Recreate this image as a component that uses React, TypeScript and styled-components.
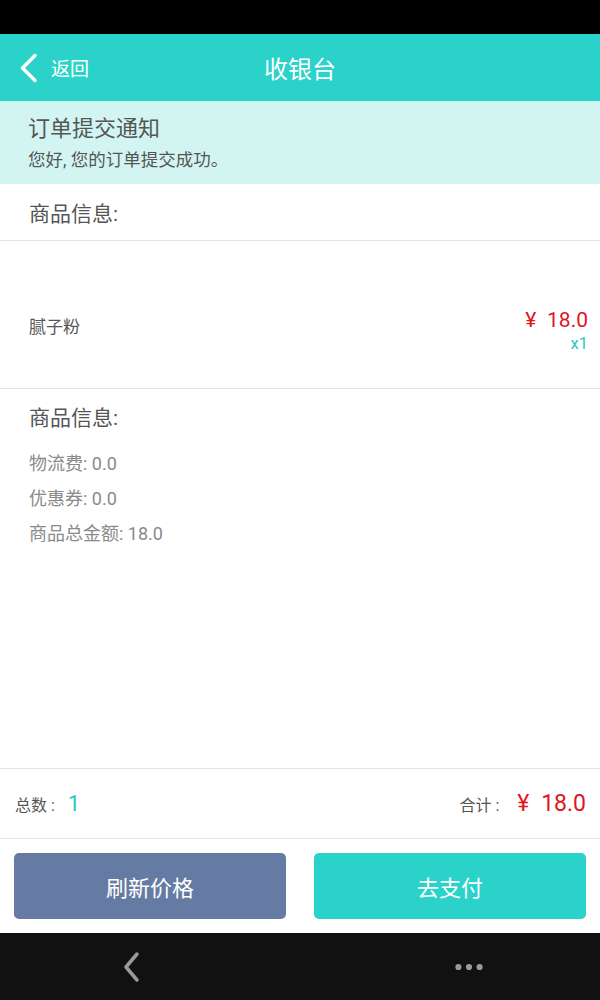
import styled, { createGlobalStyle } from 'styled-components';

const GlobalStyle = createGlobalStyle`
  html, body {
    margin: 0;
    padding: 0;
    background: #fff;
  }
  body {
    font-family: Roboto, "Noto Sans CJK SC", sans-serif;
  }
`;

const Screen = styled.div`
  width: 600px;
  height: 1000px;
  display: flex;
  flex-direction: column;
  background: #fff;
  overflow: hidden;
`;

const StatusBar = styled.div`
  height: 34px;
  background: #000;
  flex-shrink: 0;
`;

const Header = styled.div`
  height: 67px;
  background: #2ad2c9;
  display: flex;
  align-items: center;
  position: relative;
  flex-shrink: 0;
`;

const BackButton = styled.div`
  display: flex;
  align-items: center;
  padding-left: 18px;
  color: #fff;
  font-size: 19px;
  gap: 13px;
`;

const Title = styled.div`
  position: absolute;
  left: 0;
  right: 0;
  text-align: center;
  color: #fff;
  font-size: 24px;
  pointer-events: none;
`;

const Notice = styled.div`
  height: 83px;
  background: #d3f5f2;
  display: flex;
  flex-direction: column;
  padding: 13px 29px 0 28px;
  box-sizing: border-box;
  flex-shrink: 0;
`;

const NoticeTitle = styled.div`
  font-size: 22px;
  color: #555;
  line-height: 30px;
`;

const NoticeText = styled.div`
  font-size: 17.5px;
  color: #555;
  line-height: 28px;
  margin-top: 2px;
`;

const SectionHead = styled.div`
  height: 56px;
  display: flex;
  align-items: center;
  padding: 0 29px;
  font-size: 21px;
  color: #555;
  border-bottom: 1px solid #e2e2e2;
  flex-shrink: 0;
`;

const ItemRow = styled.div`
  height: 148px;
  display: flex;
  align-items: flex-start;
  justify-content: space-between;
  padding: 66px 12px 0 29px;
  box-sizing: border-box;
  border-bottom: 1px solid #e2e2e2;
  flex-shrink: 0;
`;

const ItemName = styled.div`
  font-size: 17px;
  line-height: 24px;
  color: #555;
  margin-top: 8px;
`;

const PriceCol = styled.div`
  display: flex;
  flex-direction: column;
  align-items: flex-end;
`;

const Price = styled.div<{ $size: number }>`
  color: #e0161c;
  font-size: ${p => p.$size}px;
  line-height: 26px;
  white-space: pre;
`;

const Qty = styled.div`
  color: #2ac9c0;
  font-size: 16.5px;
  line-height: 22px;
`;

const Summary = styled.div`
  flex: 1;
  padding: 14px 29px 0;
  display: flex;
  flex-direction: column;
`;

const SummaryTitle = styled.div`
  font-size: 21px;
  color: #555;
  line-height: 30px;
  margin-bottom: 13px;
`;

const SummaryLine = styled.div`
  font-size: 18px;
  color: #8a8a8a;
  line-height: 35px;
`;

const TotalBar = styled.div`
  height: 71px;
  box-sizing: border-box;
  border-top: 1px solid #e2e2e2;
  border-bottom: 1px solid #e2e2e2;
  display: flex;
  align-items: center;
  justify-content: space-between;
  padding: 0 14px 0 15px;
  flex-shrink: 0;
`;

const TotalGroup = styled.div`
  display: flex;
  align-items: baseline;
`;

const Label = styled.span<{ $gap: number }>`
  font-size: 16px;
  color: #555;
  margin-right: ${p => p.$gap}px;
  white-space: pre;
`;

const Count = styled.span`
  font-size: 22px;
  color: #2ac9c0;
`;

const Actions = styled.div`
  height: 94px;
  display: flex;
  align-items: center;
  gap: 28px;
  padding: 0 14px;
  flex-shrink: 0;
`;

const ActionButton = styled.button<{ $tone: string }>`
  flex: 1;
  height: 66px;
  border: none;
  border-radius: 5px;
  background: ${p => p.$tone};
  color: #fff;
  font-size: 22px;
  font-family: inherit;
`;

const NavBar = styled.div`
  height: 67px;
  background: #111;
  display: flex;
  align-items: center;
  justify-content: space-between;
  padding: 0 116px;
  flex-shrink: 0;
`;

const NavSlot = styled.div`
  width: 30px;
  display: flex;
  justify-content: center;
`;

export default function App() {
  return (
    <Screen>
      <GlobalStyle />
      <StatusBar />
      <Header>
        <BackButton>
          <svg width="20" height="30" viewBox="0 0 20 30">
            <path d="M17 2.5 L4.5 15 L17 27.5" stroke="#fff" strokeWidth="3.5" fill="none" strokeLinecap="round" strokeLinejoin="round" />
          </svg>
          返回
        </BackButton>
        <Title>收银台</Title>
      </Header>
      <Notice>
        <NoticeTitle>订单提交通知</NoticeTitle>
        <NoticeText>您好, 您的订单提交成功。</NoticeText>
      </Notice>
      <SectionHead>商品信息:</SectionHead>
      <ItemRow>
        <ItemName>腻子粉</ItemName>
        <PriceCol>
          <Price $size={21}>{'¥\u200218.0'}</Price>
          <Qty>x1</Qty>
        </PriceCol>
      </ItemRow>
      <Summary>
        <SummaryTitle>商品信息:</SummaryTitle>
        <SummaryLine>物流费: 0.0</SummaryLine>
        <SummaryLine>优惠券: 0.0</SummaryLine>
        <SummaryLine>商品总金额: 18.0</SummaryLine>
      </Summary>
      <TotalBar>
        <TotalGroup>
          <Label $gap={13}>总数 :</Label>
          <Count>1</Count>
        </TotalGroup>
        <TotalGroup>
          <Label $gap={18}>合计 :</Label>
          <Price $size={23}>{'¥\u200218.0'}</Price>
        </TotalGroup>
      </TotalBar>
      <Actions>
        <ActionButton $tone="#657ba3">刷新价格</ActionButton>
        <ActionButton $tone="#2ad2c9">去支付</ActionButton>
      </Actions>
      <NavBar>
        <NavSlot>
          <svg width="20" height="32" viewBox="0 0 20 32">
            <path d="M16 3 L5 16 L16 29" stroke="#9a9a9a" strokeWidth="3.5" fill="none" strokeLinecap="round" strokeLinejoin="round" />
          </svg>
        </NavSlot>
        <NavSlot>
          <svg width="34" height="10" viewBox="0 0 34 10">
            <circle cx="5" cy="5" r="3.5" fill="#9a9a9a" />
            <circle cx="17" cy="5" r="3.5" fill="#9a9a9a" />
            <circle cx="29" cy="5" r="3.5" fill="#9a9a9a" />
          </svg>
        </NavSlot>
      </NavBar>
    </Screen>
  );
}
